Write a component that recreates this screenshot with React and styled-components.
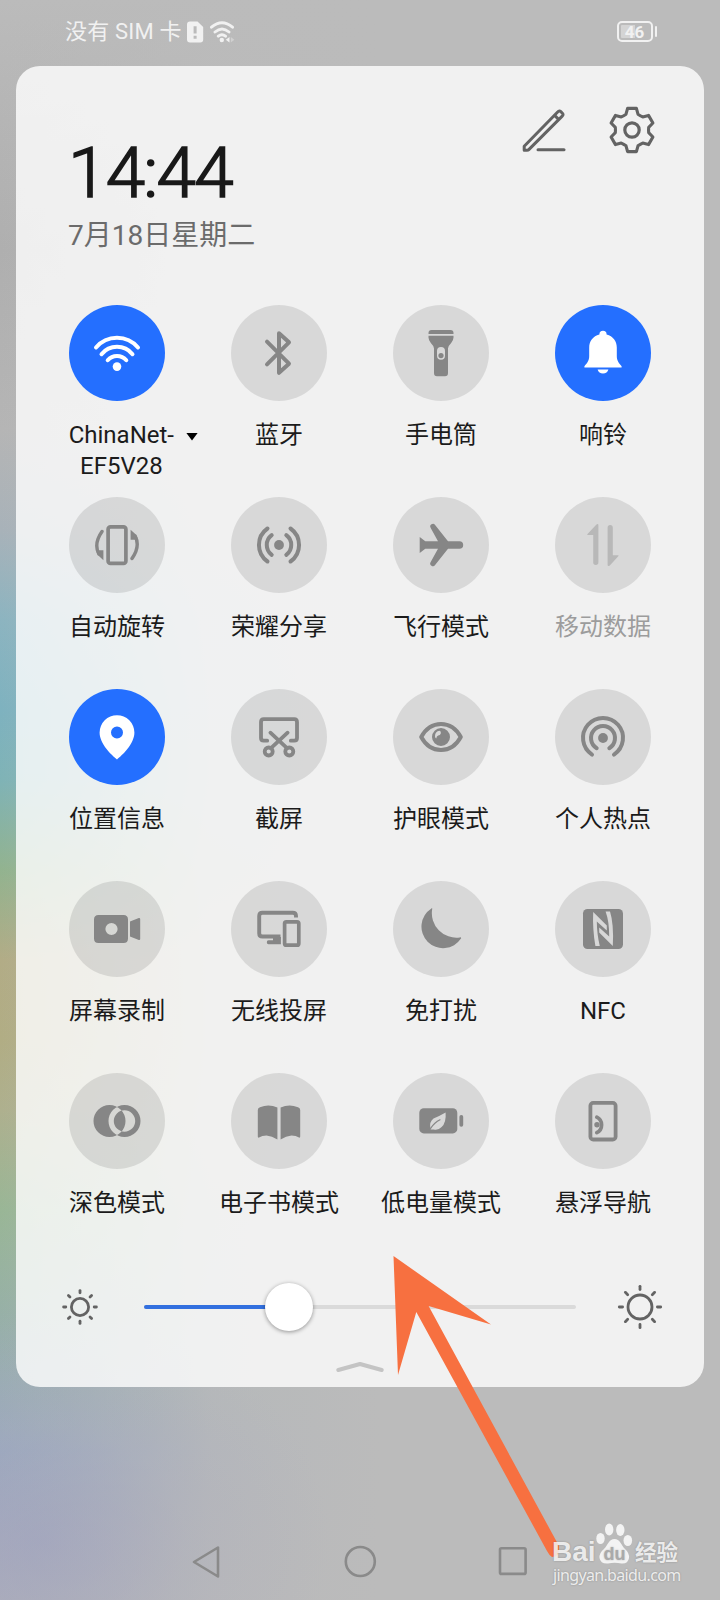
import React from 'react'
import styled, { createGlobalStyle } from 'styled-components'

/******************************************************************************/
// Data
/******************************************************************************/

const BLUE = '#246fff'
const ICON = '#868686'
const DISC = '#d8d8d8'
const LINE = '#636363'
const ORANGE = '#f77040'

const FONT = 'Roboto, "Noto Sans CJK SC", sans-serif'

const TILES = [
  { icon: 'wifi', label: ['ChinaNet-', 'EF5V28'], active: true, menu: true },
  { icon: 'bluetooth', label: ['蓝牙'] },
  { icon: 'torch', label: ['手电筒'] },
  { icon: 'bell', label: ['响铃'], active: true },
  { icon: 'rotate', label: ['自动旋转'] },
  { icon: 'share', label: ['荣耀分享'] },
  { icon: 'plane', label: ['飞行模式'] },
  { icon: 'data', label: ['移动数据'], disabled: true },
  { icon: 'location', label: ['位置信息'], active: true },
  { icon: 'screenshot', label: ['截屏'] },
  { icon: 'eye', label: ['护眼模式'] },
  { icon: 'hotspot', label: ['个人热点'] },
  { icon: 'record', label: ['屏幕录制'] },
  { icon: 'cast', label: ['无线投屏'] },
  { icon: 'moon', label: ['免打扰'] },
  { icon: 'nfc', label: ['NFC'] },
  { icon: 'dark', label: ['深色模式'] },
  { icon: 'book', label: ['电子书模式'] },
  { icon: 'saver', label: ['低电量模式'] },
  { icon: 'dock', label: ['悬浮导航'] }
]

const BRIGHTNESS = 33.6

/******************************************************************************/
// Icons, all drawn around 0,0
/******************************************************************************/

const Glyph = styled.svg.attrs({ viewBox: '-24 -24 48 48' })`
  display: block;
  width: 48px;
  height: 48px;
  fill: currentColor;
  stroke: none;

  .line {
    fill: none;
    stroke: currentColor;
    stroke-width: 4;
    stroke-linecap: round;
    stroke-linejoin: round;
  }
`

const ICONS = {
  wifi: <>
    <path className='line' d='M-21 -5.5A27.4 27.4 0 0 1 21 -5.5M-15.5 1.2A20 20 0 0 1 15.5 1.2M-9.3 7.2A12.2 12.2 0 0 1 9.3 7.2'/>
    <circle cy='13.6' r='4.3'/>
  </>,
  bluetooth: <path className='line' d='M-12 -11.3L10 10.7L0 19.8V-19.8L10 -10.7L-12 11.3'/>,
  torch: <>
    <path d='M-12.5 -19V-20Q-12.5 -23 -9.5 -23H9.5Q12.5 -23 12.5 -20V-19Z'/>
    <path fillRule='evenodd' d='M-12.5 -17.2H12.5V-15.5Q12.5 -12.5 10 -9.8Q7 -7 7 -4.5V20Q7 23.2 4 23.2H-4Q-7 23.2 -7 20V-4.5Q-7 -7 -10 -9.8Q-12.5 -12.5 -12.5 -15.5ZM-4 -2V2.7A4 4 0 0 0 4 2.7V-2A4 4 0 0 0 -4 -2Z'/>
    <circle cy='2.6' r='2.6'/>
  </>,
  bell: <>
    <path d='M-3.6 -18.6A3.6 3.6 0 0 1 3.6 -18.6C10 -17 13.8 -11.8 13.8 -5.5V3C13.8 8 16 10 18.6 13.2V14.5H-18.6V13.2C-16 10 -13.8 8 -13.8 3V-5.5C-13.8 -11.8 -10 -17 -3.6 -18.6Z'/>
    <path d='M-5.4 16.4H5.4A5.6 5.6 0 0 1 -5.4 16.4Z'/>
  </>,
  rotate: <>
    <rect className='line' x='-8.9' y='-18.1' width='17.8' height='36.4' rx='2.4' style={{ strokeWidth: 3.7 }}/>
    <path className='line' d='M-15 -13.5Q-23.5 -1.5 -18.2 9M15 13.5Q23.5 1.5 18.2 -9' style={{ strokeWidth: 3.4 }}/>
    <path d='M-13.6 5.2V15.3Q-18.5 11.8 -20.6 7L-19 5.2ZM13.6 -5.2V-15.3Q18.5 -11.8 20.6 -7L19 -5.2Z'/>
  </>,
  share: <>
    <path className='line' d='M-7.3 -9.8A12.2 12.2 0 0 0 -7.3 9.8M7.3 -9.8A12.2 12.2 0 0 1 7.3 9.8M-11.5 -16.5A20.2 20.2 0 0 0 -11.5 16.5M11.5 -16.5A20.2 20.2 0 0 1 11.5 16.5'/>
    <circle r='4.9'/>
  </>,
  plane: <path d='M-21.3 -8L-15.7 -3.8H-3L-10.3 -17A2.6 2.6 0 0 1 -5.9 -19.9L7 -3.8H18.4A3.8 3.8 0 0 1 18.4 3.8H7L-5.9 19.9A2.6 2.6 0 0 1 -10.3 17L-3 3.8H-15.7L-21.3 8Z'/>,
  data: <>
    <path d='M-4.6 -19.6V17.3A2.6 2.6 0 0 1 -9.8 17.3V-10H-15.2Q-16.4 -10 -15.5 -11L-6.8 -20.3Q-4.6 -21.8 -4.6 -19.6Z'/>
    <path d='M4.6 19.8V-17.3A2.6 2.6 0 0 1 9.8 -17.3V10.2H15Q16.2 10.2 15.3 11.2L6.8 20.5Q4.6 22 4.6 19.8Z'/>
  </>,
  location: <path fillRule='evenodd' d='M0 22.5C-5 18.5 -17.4 7 -17.4 -4.4A17.4 17.4 0 0 1 17.4 -4.4C17.4 7 5 18.5 0 22.5ZM-6 -4.5A6 6 0 1 0 6 -4.5A6 6 0 1 0 -6 -4.5Z'/>,
  screenshot: <g className='line' style={{ strokeWidth: 3.8 }}>
    <path d='M-11.8 3.7H-15.3Q-18 3.7 -18 1V-15Q-18 -17.8 -15.2 -17.8H15.2Q18 -17.8 18 -15V1Q18 3.7 15.3 3.7H11.8'/>
    <path d='M-8.6 -4.3L8 11.2M8.6 -4.3L-8 11.2'/>
    <circle cx='-10.3' cy='14.5' r='4'/>
    <circle cx='10.3' cy='14.5' r='4'/>
  </g>,
  eye: <>
    <path className='line' d='M-19.8 0C-15 -8.8 -8 -13 0 -13S15 -8.8 19.8 0C15 8.8 8 13 0 13S-15 8.8 -19.8 0Z'/>
    <path fillRule='evenodd' d='M-9 0A9 9 0 1 0 9 0A9 9 0 1 0 -9 0ZM-6 -0.5Q-6 -5.8 -1.4 -6.2Q0.4 -5.5 -0.2 -3.6Q-0.8 -1.6 -2.8 -1.6Q-4.4 -1.2 -4.8 1.6Q-5.8 1 -6 -0.5Z'/>
  </>,
  hotspot: <>
    <path className='line' d='M-11 17.6A20 20 0 1 1 11 17.6M-6.3 11.2A12 12 0 1 1 6.3 11.2'/>
    <circle cy='1' r='4.9'/>
  </>,
  record: <>
    <path fillRule='evenodd' d='M-18.5 -14H6.5Q11 -14 11 -9.5V9.5Q11 14 6.5 14H-18.5Q-23 14 -23 9.5V-9.5Q-23 -14 -18.5 -14ZM-11.6 0A6.1 6.1 0 1 0 0.6 0A6.1 6.1 0 1 0 -11.6 0Z'/>
    <path d='M13 -7.5L21.8 -11Q23.2 -11.2 23.2 -10V10Q23.2 11.2 21.8 11L13 7.5Z'/>
  </>,
  cast: <>
    <path className='line' d='M17 -11.5V-13Q17 -16.3 13.7 -16.3H-16.5Q-19.8 -16.3 -19.8 -13V4.2Q-19.8 7.5 -16.5 7.5H1.5' style={{ strokeWidth: 3.9, strokeLinecap: 'butt' }}/>
    <rect className='line' x='5.6' y='-7.2' width='14.2' height='23.4' rx='1.8' style={{ strokeWidth: 3.7 }}/>
    <path d='M-6 8H1.9V15.2H-10.5Q-12.2 15.2 -12.2 13.2T-10.5 11.2H-6Z'/>
  </>,
  moon: <path d='M-9.6 -20.6Q-8.6 -21.4 -8.8 -20A24.5 24.5 0 0 0 18.8 8.4Q20.6 8 20 9.6A21.6 21.6 0 1 1 -9.6 -20.6Z'/>,
  nfc: <>
    <rect x='-20' y='-20' width='40' height='40' rx='4.5'/>
    <g fill={DISC}>
      <path d='M-9.8 -17L3.8 -3.5V1.6L-6.2 -7.5Q-6 6 -3.2 17H-7.6Q-10.6 0 -9.8 -17Z'/>
      <path d='M9.8 17L-3.8 3.5V-1.6L6.2 7.5Q6.2 -8 2.6 -17.6H7Q11 -5 9.8 17Z'/>
    </g>
  </>,
  dark: <path fillRule='evenodd' d='M-23.5 0A16 16 0 1 0 8.5 0A16 16 0 1 0 -23.5 0ZM-8.5 0A16 16 0 1 0 23.5 0A16 16 0 1 0 -8.5 0ZM-3.2 0A10.7 10.7 0 1 0 18.2 0A10.7 10.7 0 1 0 -3.2 0Z'/>,
  book: <>
    <path d='M-1.6 -13.4V18.6Q-7 15 -12.5 14.4Q-17 14.4 -20 16.6Q-21.2 17 -21.2 15.6V-11Q-21.2 -13 -19 -13.8Q-10 -17.2 -1.6 -13.4Z'/>
    <path d='M1.6 -13.4V18.6Q7 15 12.5 14.4Q17 14.4 20 16.6Q21.2 17 21.2 15.6V-11Q21.2 -13 19 -13.8Q10 -17.2 1.6 -13.4Z'/>
  </>,
  saver: <>
    <rect x='-21.7' y='-12.8' width='38' height='25.2' rx='4.5'/>
    <rect x='18.4' y='-6' width='3.8' height='11.8' rx='1.8'/>
    <path fill={DISC} d='M4.6 -8.4Q5.4 2 0.6 6Q-2.6 9.4 -7.2 8.4L-9.4 8.6Q-10.8 8.8 -10.6 7.2Q-12 1 -7.5 -2.6Q-1 -5 4.6 -8.4Z'/>
    <path className='line' d='M-10.4 7.4Q-6.5 1.5 -1 -1.2' style={{ strokeWidth: 1.2 }}/>
  </>,
  dock: <>
    <rect className='line' x='-12.6' y='-18.1' width='25.2' height='36.6' rx='2.8' style={{ strokeWidth: 3.8 }}/>
    <path className='line' d='M-6.2 -3.8A8.6 8.6 0 0 1 -6.2 11.6' style={{ strokeWidth: 3.7 }}/>
    <circle cx='-6' cy='3.8' r='2.7'/>
  </>
}

const rotate = (x, y, deg) => {
  const a = deg * Math.PI / 180
  return `${(x * Math.cos(a) - y * Math.sin(a)).toFixed(2)} ${(x * Math.sin(a) + y * Math.cos(a)).toFixed(2)}`
}

const GEAR = 'M' + [0, 60, 120, 180, 240, 300].map(deg => [
  rotate(-6, -15.8, deg),
  rotate(-4.4, -21.6, deg),
  rotate(4.4, -21.6, deg),
  rotate(6, -15.8, deg)
].join('L') + 'Q' + rotate(8.2, -14.2, deg) + ' ' + rotate(-6, -15.8, deg + 60)).join('L') + 'Z'

const Sun = ({ r, from, to }) =>
  <Glyph>
    <g className='line' style={{ strokeWidth: 2.8 }}>
      <circle r={r}/>
      {[0, 45, 90, 135, 180, 225, 270, 315].map(deg =>
        <path key={deg} d={`M0 ${from}V${to}`} transform={`rotate(${deg})`}/>
      )}
    </g>
  </Glyph>

/******************************************************************************/
// Styled
/******************************************************************************/

const Global = createGlobalStyle`
  body {
    margin: 0;
  }
`

const Screen = styled.div`
  box-sizing: border-box;
  position: relative;
  width: 720px;
  height: 1600px;
  overflow: hidden;
  font-family: ${FONT};

  display: flex;
  flex-direction: column;

  background:
    radial-gradient(ellipse 290px 230px at 40px 1540px, rgba(158, 162, 190, 0.55), rgba(170, 172, 188, 0.3) 50%, rgba(187, 187, 187, 0)),
    linear-gradient(to right, rgba(187, 187, 187, 0) 0, rgba(187, 187, 187, 0.3) 80px, rgba(187, 187, 187, 0.85) 210px, #bbb 380px),
    linear-gradient(
      to bottom,
      #bbb 0, #b5b5b5 120px, #afafaf 250px, #b5b5b5 430px, #a8b2b9 530px, #8cb4c0 620px,
      #7eb2bf 710px, #7fb3b6 780px, #92b38f 870px, #b2ac86 960px,
      #b1ad84 1040px, #aeb08e 1110px, #99b696 1210px, #97b0a8 1320px,
      #99a8bf 1450px, #a9acbd 1540px, #aeafbb 1600px
    );
`

const StatusBar = styled.div`
  box-sizing: border-box;
  height: 66px;
  padding: 0 63px 3px 65px;

  display: flex;
  align-items: center;
  color: #f1f1f1;
`

const Carrier = styled.span`
  font-size: 22px;
  line-height: 30px;
  letter-spacing: 0.2px;
  white-space: nowrap;
  margin-right: auto;
  display: flex;
  align-items: center;
`

const StatusIcons = styled.svg`
  width: 50px;
  height: 24px;
  margin-left: 4px;
`

const Battery = styled.span`
  box-sizing: border-box;
  width: 36px;
  height: 21px;
  border: 2px solid #f1f1f1;
  border-radius: 5px;
  background: linear-gradient(to right, #d4d4d4 14px, transparent 14px) content-box;
  padding: 2px;

  font-size: 17px;
  font-weight: 700;
  line-height: 14px;
  text-align: center;
`

const BatteryTip = styled.span`
  width: 2.5px;
  height: 11px;
  margin-left: 2px;
  border-radius: 1px;
  background: #f1f1f1;
`

const Panel = styled.div`
  box-sizing: border-box;
  margin: 0 16px;
  height: 1320.5px;
  border-radius: 24px;
  background: rgba(255, 255, 255, 0.8);

  display: flex;
  flex-direction: column;
`

const Header = styled.div`
  box-sizing: border-box;
  height: 238.5px;
  padding: 40px 48px 0 52px;

  display: flex;
  align-items: flex-start;
  justify-content: space-between;
`

const Clock = styled.div`
  display: flex;
  flex-direction: column;
  padding-top: 28px;
`

const Time = styled.div`
  height: 78px;
  font-family: Roboto, sans-serif;
  font-size: 71px;
  font-weight: 300;
  line-height: 78px;
  letter-spacing: -1.7px;
  color: #191919;
  -webkit-text-stroke: 1.6px #191919;
  stroke-linejoin: round;
`

const Today = styled.div`
  font-size: 28px;
  line-height: 40px;
  margin-top: 4px;
  color: #6b6b6b;
`

const Actions = styled.div`
  display: flex;
  gap: 40px;
  color: ${LINE};
`

const Tiles = styled.div`
  padding: 0 20px;
  display: grid;
  grid-template-columns: repeat(4, 162px);
  grid-auto-rows: 192px;
`

const TileBox = styled.div`
  display: flex;
  flex-direction: column;
  align-items: center;
`

const Disc = styled.div`
  width: 96px;
  height: 96px;
  border-radius: 50%;
  background: ${({ $active }) => $active ? BLUE : 'rgba(0, 0, 0, 0.1)'};
  color: ${({ $active, $disabled }) => $active ? 'white' : $disabled ? '#b8b8b8' : ICON};

  display: flex;
  align-items: center;
  justify-content: center;
`

const Label = styled.div`
  margin-top: 19px;
  font-size: 24px;
  line-height: 31px;
  text-align: center;
  white-space: nowrap;
  color: ${({ $disabled }) => $disabled ? '#9c9c9c' : '#1b1b1b'};

  display: flex;
  gap: 12px;
  align-self: ${({ $menu }) => $menu ? 'flex-end' : 'center'};
`

const Caret = styled.span`
  width: 12px;
  height: 8px;
  margin-top: 13px;
  background: black;
  clip-path: polygon(0 0, 100% 0, 50% 100%);
`

const Brightness = styled.div`
  height: 48px;
  margin-top: 18px;
  padding: 0 40px;

  display: flex;
  align-items: center;
  justify-content: space-between;
  color: ${LINE};
`

const Track = styled.div`
  flex: 0 0 432px;
  height: 4px;
  border-radius: 2px;
  background: #dadada;

  display: flex;
  align-items: center;
`

const Fill = styled.div`
  height: 4px;
  border-radius: 2px;
  background: #3270df;
`

const Thumb = styled.div`
  width: 48px;
  height: 48px;
  margin-left: -24px;
  border-radius: 50%;
  background: white;
  box-shadow: 0 1px 4px rgba(0, 0, 0, 0.4);
`

const Handle = styled.svg`
  display: block;
  width: 48px;
  height: 12px;
  margin: 30px auto 0;
`

const NavBar = styled.div`
  margin-top: auto;
  height: 77px;
  padding: 0 187px 0 186px;

  display: flex;
  align-items: center;
  justify-content: space-between;
  color: #8a8a8a;
`

const NavIcon = styled.svg`
  width: 40px;
  height: 40px;
  fill: none;
  stroke: currentColor;
  stroke-width: 2.6;
  stroke-linejoin: round;
`

// Annotation that lies over the whole screen
const Pointer = styled.svg`
  position: absolute;
  left: 390px;
  top: 1250px;
  width: 180px;
  height: 310px;
  fill: ${ORANGE};
`

const Watermark = styled.div`
  position: absolute;
  left: 552px;
  top: 1520px;
  width: 130px;
  color: rgba(255, 255, 255, 0.82);
  text-shadow: 0 0 2px rgba(0, 0, 0, 0.25);
`

const Brand = styled.div`
  height: 45px;
  display: flex;
  align-items: flex-end;
  white-space: nowrap;
`

const Bai = styled.span`
  width: 45px;
  margin-bottom: -1px;
  font: bold 28px/28px "Liberation Sans", sans-serif;
`

const Paw = styled.svg`
  width: 37px;
  height: 43px;
  margin: 0 2px 0 -1px;
  fill: rgba(255, 255, 255, 0.82);
`

const Jingyan = styled.span`
  margin-bottom: 3px;
  font: bold 21.5px/22px "Noto Sans CJK SC", sans-serif;
`

const Site = styled.div`
  padding: 0 0 0 1px;
  font: 16px/20px "Noto Sans", sans-serif;
  letter-spacing: -0.65px;
  white-space: nowrap;
`

/******************************************************************************/
// Components
/******************************************************************************/

const Tile = ({ icon, label, active, disabled, menu }) =>
  <TileBox>
    <Disc $active={active} $disabled={disabled}>
      <Glyph>{ICONS[icon]}</Glyph>
    </Disc>
    <Label $disabled={disabled} $menu={menu}>
      <div>{label.map(line => <div key={line}>{line}</div>)}</div>
      {menu && <Caret/>}
    </Label>
  </TileBox>

const Status = () =>
  <StatusBar>
    <Carrier>
      没有 SIM 卡
      <StatusIcons viewBox='0 0 50 24' fill='#f1f1f1'>
        <path fillRule='evenodd' d='M4 1.5H11.5L17.2 7V19.5Q17.2 22.5 14.2 22.5H4Q1 22.5 1 19.5V4.5Q1 1.5 4 1.5ZM7.6 6.2V13.6H10.6V6.2ZM7.6 15.8V18.8H10.6V15.8Z'/>
        <path d='M25.5 7.2Q36 -1.5 46.5 7.2M29 12Q36 5.8 43 12M32.3 16.2Q36 13.2 39.5 16.2' fill='none' stroke='#f1f1f1' strokeWidth='2.9' strokeLinecap='round'/>
        <circle cx='35.8' cy='20' r='2.2'/>
        <path d='M43.5 17V22.5L39.8 19.8Z'/>
        <path d='M44.8 17V22.5L48.4 19.8Z' opacity='0.4'/>
      </StatusIcons>
    </Carrier>
    <Battery>46</Battery>
    <BatteryTip/>
  </StatusBar>

/******************************************************************************/
// Main Component
/******************************************************************************/

const App = () =>
  <Screen>
    <Global/>
    <Status/>
    <Panel>
      <Header>
        <Clock>
          <Time>14:44</Time>
          <Today>7月18日星期二</Today>
        </Clock>
        <Actions>
          <Glyph>
            <g className='line' style={{ strokeWidth: 3 }}>
              <path d='M-19.8 20V16.2L13.9 -18.2Q15.3 -19.8 16.8 -18.4L18.4 -16.8Q19.8 -15.3 18.2 -13.9L-15.2 19.6Q-15.8 20.2 -17 20.2H-19.8ZM10.6 -14.6L14.6 -10.6'/>
              <path d='M-6 19.8H20'/>
            </g>
          </Glyph>
          <Glyph>
            <path className='line' d={GEAR} style={{ strokeWidth: 3.1 }}/>
            <circle className='line' r='7.2' style={{ strokeWidth: 3.2 }}/>
          </Glyph>
        </Actions>
      </Header>
      <Tiles>
        {TILES.map(tile => <Tile key={tile.icon} {...tile}/>)}
      </Tiles>
      <Brightness>
        <Sun r={8.6} from={14.2} to={16.4}/>
        <Track>
          <Fill style={{ width: `${BRIGHTNESS}%` }}/>
          <Thumb/>
        </Track>
        <Sun r={12} from={17.4} to={20.7}/>
      </Brightness>
      <Handle viewBox='0 0 48 12' fill='none' stroke='#c4c4c4' strokeWidth='4' strokeLinecap='round' strokeLinejoin='round'>
        <path d='M2.3 9L24 3L45.7 9'/>
      </Handle>
    </Panel>
    <NavBar>
      <NavIcon viewBox='0 0 40 40'><path d='M32 5.5V34.5L8 20Z'/></NavIcon>
      <NavIcon viewBox='0 0 40 40'><circle cx='20.3' cy='19.5' r='14.5'/></NavIcon>
      <NavIcon viewBox='0 0 40 40'><rect x='7' y='6.3' width='25.6' height='25.6' rx='1.5'/></NavIcon>
    </NavBar>
    <Pointer viewBox='390 1250 180 310'>
      <path d='M393.5 1256L491 1324.6L428.6 1306L559 1546Q560 1557 552 1557Q549 1555 547 1551L416.3 1312L398 1375Z'/>
    </Pointer>
    <Watermark>
      <Brand>
        <Bai>Bai</Bai>
        <Paw viewBox='0 0 37 43'>
          <ellipse cx='4.5' cy='16.5' rx='4.2' ry='5.5'/>
          <ellipse cx='13.2' cy='7.5' rx='4.2' ry='6'/>
          <ellipse cx='24.3' cy='8' rx='4.2' ry='6'/>
          <ellipse cx='31.8' cy='18.5' rx='4.3' ry='5.5'/>
          <path d='M18.5 17C24 17 25 23 29 27Q33.5 31 33 36Q32 42 25.5 41.5Q18.5 40 12 41.5Q4.5 42 3.5 36Q3 31 8 27C12 23 13 17 18.5 17Z'/>
          <text x='18.5' y='38' textAnchor='middle' fontFamily='Liberation Sans, sans-serif' fontWeight='bold' fontSize='18' fill='#aaa'>du</text>
        </Paw>
        <Jingyan>经验</Jingyan>
      </Brand>
      <Site>jingyan.baidu.com</Site>
    </Watermark>
  </Screen>

/******************************************************************************/
// Exports
/******************************************************************************/

export default App
